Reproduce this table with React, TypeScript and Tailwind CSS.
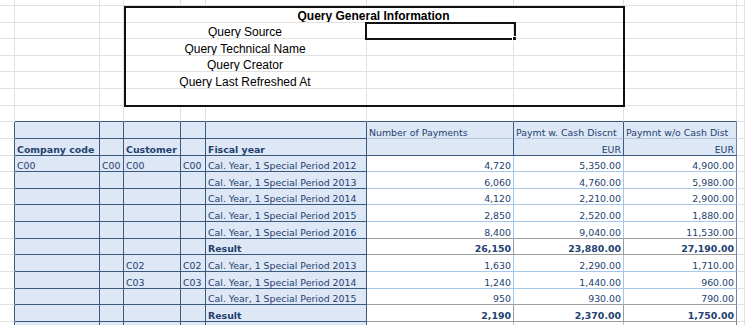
import React from "react";

// column widths of the sheet (A..J) and row heights
const W = [15, 85, 24, 57, 25, 161, 147, 110, 113, 8];
const H = [6, 17, 16, 17, 16, 17, 17, 16, 17, 17, 16, 17, 16, 17, 17, 16, 17, 17, 16, 17, 17];

const GRID_R = "border-r-[#e1e1e1]";
const GRID_B = "border-b-[#e1e1e1]";
const NAVY_R = "border-r-[#3b5a80]";
const NAVY_B = "border-b-[#3b5a80]";
const LIGHT_R = "border-r-[#a6c6ec]";
const LIGHT_B = "border-b-[#a6c6ec]";
const GRAY_R = "border-r-[#9c9c9c]";
const GRAY_B = "border-b-[#9c9c9c]";
const EDGE_R = "border-r-[#6f84a3]";
const HDR_B = "border-b-[#b3c6de]";
const KEY_BG = "bg-[#dde7f5]";

type Cell = {
  w: number;
  r: string;
  b: string;
  bg?: string;
  t?: string;
  align?: "left" | "right" | "center";
  bold?: boolean;
  q?: boolean;
};

const span = (a: number, z: number) => W.slice(a, z + 1).reduce((s, x) => s + x, 0);

const grid = (i: number): Cell => ({ w: W[i], r: GRID_R, b: GRID_B });

function queryRow(label: string): Cell[] {
  return [
    grid(0),
    grid(1),
    grid(2),
    { w: span(3, 5), r: GRID_R, b: GRID_B, t: label, align: "center", q: true },
    grid(6),
    grid(7),
    grid(8),
    grid(9),
  ];
}

function keyRow(
  keys: string[],
  data: string[],
  kind: "normal" | "beforeResult" | "result",
): Cell[] {
  const bold = kind === "result";
  const db = kind === "normal" ? LIGHT_B : GRAY_B;
  const dr = kind === "result" ? GRAY_R : LIGHT_R;
  return [
    { w: W[0], r: NAVY_R, b: GRID_B },
    ...keys.map((k, i) => ({
      w: W[i + 1],
      r: NAVY_R,
      b: NAVY_B,
      bg: KEY_BG,
      t: k,
      bold: bold && i === 4,
    })),
    ...data.map((d, i) => ({
      w: W[i + 6],
      r: i === 2 ? EDGE_R : dr,
      b: db,
      t: d,
      align: "right" as const,
      bold,
    })),
    grid(9),
  ];
}

const rows: Cell[][] = [
  W.map((_, i) => grid(i)),
  [
    grid(0),
    grid(1),
    grid(2),
    { w: span(3, 7), r: GRID_R, b: GRID_B, t: "Query General Information", align: "center", bold: true, q: true },
    grid(8),
    grid(9),
  ],
  queryRow("Query Source"),
  queryRow("Query Technical Name"),
  queryRow("Query Creator"),
  queryRow("Query Last Refreshed At"),
  queryRow(""),
  W.map((_, i) => (i >= 1 && i <= 8 ? { w: W[i], r: GRID_R, b: NAVY_B } : grid(i))),
  [
    { w: W[0], r: NAVY_R, b: GRID_B },
    ...[1, 2, 3, 4, 5].map((i) => ({ w: W[i], r: NAVY_R, b: NAVY_B, bg: KEY_BG })),
    { w: W[6], r: NAVY_R, b: HDR_B, bg: KEY_BG, t: "Number of Payments" },
    { w: W[7], r: NAVY_R, b: HDR_B, bg: KEY_BG, t: "Paymt w. Cash Discnt" },
    { w: W[8], r: EDGE_R, b: HDR_B, bg: KEY_BG, t: "Paymnt w/o Cash Dist" },
    grid(9),
  ],
  [
    { w: W[0], r: NAVY_R, b: GRID_B },
    { w: W[1], r: NAVY_R, b: NAVY_B, bg: KEY_BG, t: "Company code", bold: true },
    { w: W[2], r: NAVY_R, b: NAVY_B, bg: KEY_BG },
    { w: W[3], r: NAVY_R, b: NAVY_B, bg: KEY_BG, t: "Customer", bold: true },
    { w: W[4], r: NAVY_R, b: NAVY_B, bg: KEY_BG },
    { w: W[5], r: NAVY_R, b: NAVY_B, bg: KEY_BG, t: "Fiscal year", bold: true },
    { w: W[6], r: NAVY_R, b: NAVY_B, bg: KEY_BG },
    { w: W[7], r: NAVY_R, b: NAVY_B, bg: KEY_BG, t: "EUR", align: "right" },
    { w: W[8], r: EDGE_R, b: NAVY_B, bg: KEY_BG, t: "EUR", align: "right" },
    grid(9),
  ],
  keyRow(["C00", "C00", "C00", "C00", "Cal. Year, 1 Special Period 2012"], ["4,720", "5,350.00", "4,900.00"], "normal"),
  keyRow(["", "", "", "", "Cal. Year, 1 Special Period 2013"], ["6,060", "4,760.00", "5,980.00"], "normal"),
  keyRow(["", "", "", "", "Cal. Year, 1 Special Period 2014"], ["4,120", "2,210.00", "2,900.00"], "normal"),
  keyRow(["", "", "", "", "Cal. Year, 1 Special Period 2015"], ["2,850", "2,520.00", "1,880.00"], "normal"),
  keyRow(["", "", "", "", "Cal. Year, 1 Special Period 2016"], ["8,400", "9,040.00", "11,530.00"], "beforeResult"),
  keyRow(["", "", "", "", "Result"], ["26,150", "23,880.00", "27,190.00"], "result"),
  keyRow(["", "", "C02", "C02", "Cal. Year, 1 Special Period 2013"], ["1,630", "2,290.00", "1,710.00"], "normal"),
  keyRow(["", "", "C03", "C03", "Cal. Year, 1 Special Period 2014"], ["1,240", "1,440.00", "960.00"], "normal"),
  keyRow(["", "", "", "", "Cal. Year, 1 Special Period 2015"], ["950", "930.00", "790.00"], "beforeResult"),
  keyRow(["", "", "", "", "Result"], ["2,190", "2,370.00", "1,750.00"], "result"),
  keyRow(["", "", "", "", ""], ["", "", ""], "normal"),
];

function SheetCell({ c, h }: { c: Cell; h: number }) {
  const align =
    c.align === "right"
      ? "justify-end pr-[2px]"
      : c.align === "center"
        ? "justify-center"
        : "justify-start pl-[2px]";
  const font = c.q
    ? "font-['Liberation_Sans',Arial,sans-serif] text-[12px] text-black"
    : "font-['DejaVu_Sans',Verdana,sans-serif] text-[9.4px] text-[#23416f] pb-[1px]";
  return (
    <div
      className={`flex shrink-0 items-end overflow-hidden whitespace-nowrap border-r border-b leading-none ${c.bg ?? "bg-white"} ${c.r} ${c.b} ${align}`}
      style={{ width: c.w, height: h }}
    >
      {c.t ? <span className={`${font} ${c.bold ? "font-bold" : ""}`}>{c.t}</span> : null}
    </div>
  );
}

export default function App() {
  return (
    <div className="relative h-[325px] w-[745px] overflow-hidden bg-white">
      <div className="flex flex-col">
        {rows.map((row, ri) => (
          <div key={ri} className="flex">
            {row.map((c, ci) => (
              <SheetCell key={ci} c={c} h={H[ri]} />
            ))}
          </div>
        ))}
      </div>

      {/* frame around the query info block */}
      <div className="pointer-events-none absolute left-[124px] top-[6px] h-[101px] w-[501px] border-2 border-[#111]" />

      {/* active cell selection */}
      <div className="pointer-events-none absolute left-[365px] top-[22px] h-[18px] w-[151px] border-2 border-[#111]">
        <div className="absolute -bottom-[3px] -right-[3px] h-[5px] w-[5px] border border-white bg-[#111]" />
      </div>
    </div>
  );
}
